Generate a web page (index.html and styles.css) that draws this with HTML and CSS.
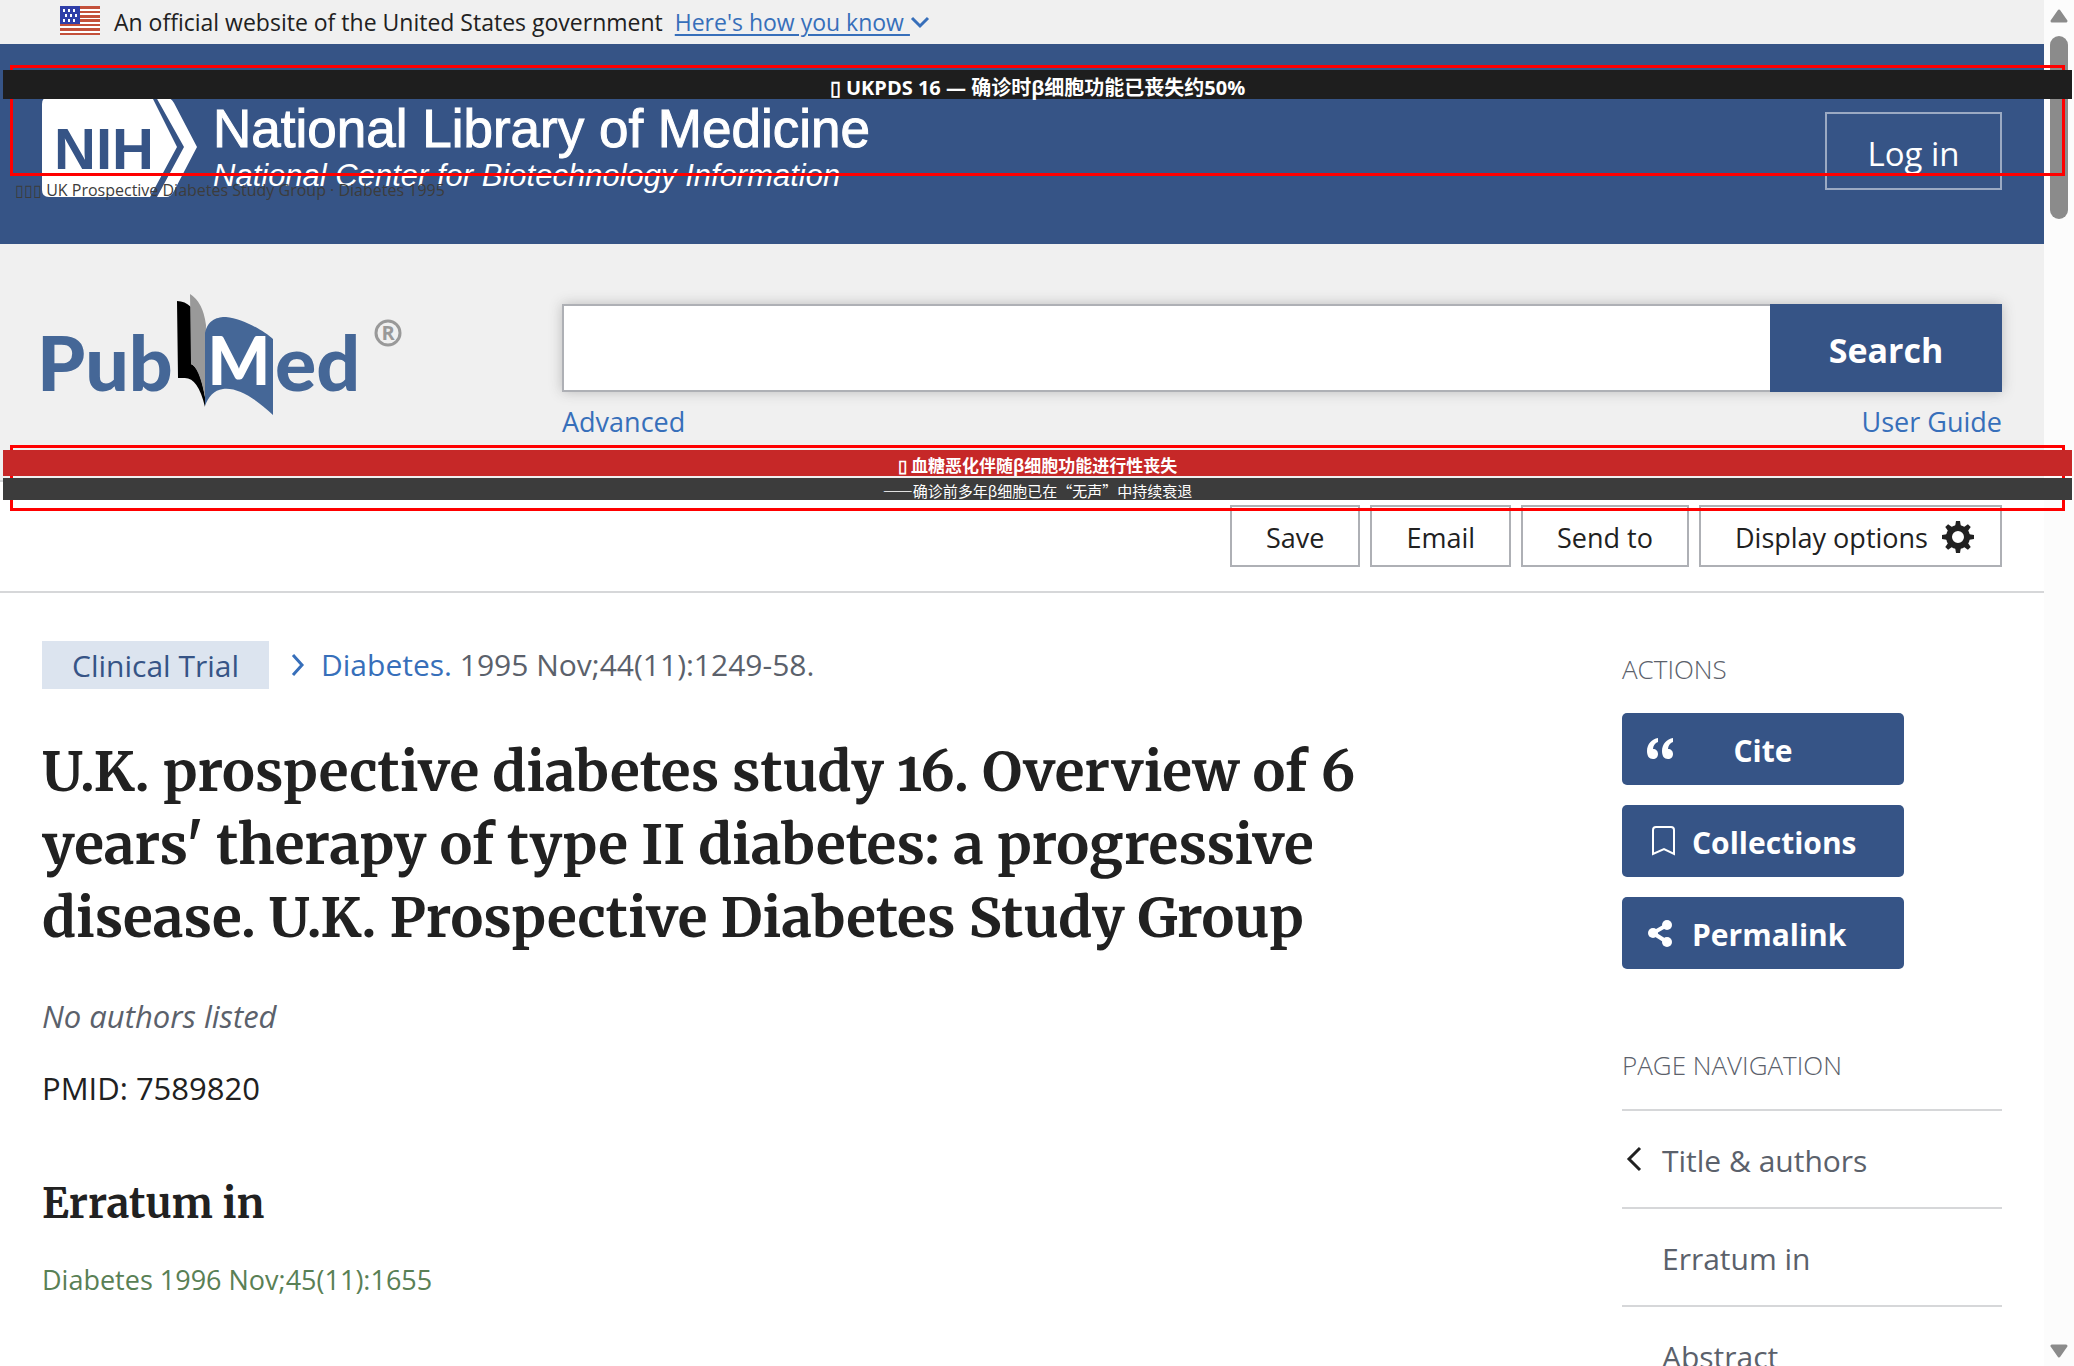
FILE: index.html
```html
<!DOCTYPE html>
<html lang="en">
<head>
<meta charset="utf-8">
<title>U.K. prospective diabetes study 16 - PubMed</title>
<link rel="stylesheet" href="styles.css">
</head>
<body>
<div class="page">
  <div class="gov">
    <svg class="flag" viewBox="0 0 40 29" aria-hidden="true">
      <path fill="#fff" d="M0 0h40v29H0z"/>
      <path fill="#c3503a" d="M0 0h40v3H0zM0 5h40v2H0zM0 9h40v3H0zM0 13h40v3H0zM0 18h40v2H0zM0 22h40v3H0zM0 27h40v2H0z"/>
      <path fill="#2f3ea8" d="M0 0h20v18H0z"/>
      <path fill="#fff" d="M3 3h2v3H3zM8 3h2v3H8zM13 3h2v3h-2zM5 8h2v3H5zM10 8h2v3h-2zM15 8h2v3h-2zM3 13h2v3H3zM8 13h2v3H8zM13 13h2v3h-2z"/>
    </svg>
    <span>An official website of the United States government</span>
    <a class="how" href="#how"><span class="how-text">Here's how you know </span><svg class="how-chevron" viewBox="0 0 20 13" aria-hidden="true"><path d="M2 2l8 8 8-8"/></svg></a>
  </div>

  <header class="masthead">
    <a class="nlm" href="#nlm">
      <svg class="nih" viewBox="0 0 155 100" role="img" aria-label="NIH">
        <path fill="#fff" d="M7 0H110L135 50 108 100H7Q0 100 0 93V7Q0 0 7 0zM114 0H122Q129 0 132 6L155 50 132 94Q129 100 124 100H115L142 50z"/>
        <text class="nih-text" x="62" y="72">NIH</text>
      </svg>
      <span class="nlm-names">
        <span class="nlm-title">National Library of Medicine</span>
        <span class="nlm-sub">National Center for Biotechnology Information</span>
      </span>
    </a>
    <button class="login" type="button">Log in</button>
  </header>

  <section class="search">
    <a class="logo" href="#home">
      <svg class="pubmed" viewBox="0 0 362 125" role="img" aria-label="PubMed">
        <text class="word" x="-5" y="98">Pub</text>
        <path d="M135 8Q143 8 149 14V71Q158 74 163 104V114Q156 84 142 85H136z"/>
        <path fill="#999" d="M148 1Q161 9 164 32L163 104Q157 74 149 71z"/>
        <path fill="#456797" d="M163 40C166 26 176 24 184 24 200 25 222 38 231 46V122C214 106 196 94 181 96 172 97 166 104 163 113z"/>
        <text class="word-m" x="197" y="92">M</text>
        <text class="word" x="233" y="98">ed</text>
        <circle cx="346" cy="40" r="12" fill="none" stroke="#999" stroke-width="3"/>
        <text class="reg" x="346" y="47">R</text>
      </svg>
    </a>
    <form class="search-form">
      <div class="search-row">
        <input class="term" type="text" aria-label="Search term">
        <button class="go" type="button">Search</button>
      </div>
      <div class="search-links"><a href="#advanced">Advanced</a><a href="#guide">User Guide</a></div>
    </form>
  </section>

  <div class="tools">
    <button class="tool" type="button">Save</button>
    <button class="tool" type="button">Email</button>
    <button class="tool" type="button">Send to</button>
    <button class="tool tool-wide" type="button">Display options
      <svg class="gear" viewBox="-16 -16 32 32" aria-hidden="true">
        <circle r="9" fill="none" stroke="#212121" stroke-width="6"/>
        <g fill="#212121"><path id="t" d="M-3-10L-2-16H2L3-10z"/><use href="#t" transform="rotate(45)"/><use href="#t" transform="rotate(90)"/><use href="#t" transform="rotate(135)"/><use href="#t" transform="rotate(180)"/><use href="#t" transform="rotate(225)"/><use href="#t" transform="rotate(270)"/><use href="#t" transform="rotate(315)"/></g>
      </svg>
    </button>
  </div>

  <div class="body">
    <main class="article">
      <div class="source">
        <span class="tag">Clinical Trial</span>
        <svg class="source-chevron" viewBox="0 0 14 24" aria-hidden="true"><path d="M2 2l9 10-9 10"/></svg>
        <span class="cite-line"><a href="#journal">Diabetes.</a> 1995 Nov;44(11):1249-58.</span>
      </div>
      <h1 class="title">U.K. prospective diabetes study 16. Overview of 6 years' therapy of type II diabetes: a progressive disease. U.K. Prospective Diabetes Study Group</h1>
      <p class="authors">No authors listed</p>
      <p class="pmid">PMID: 7589820</p>
      <h2 class="subtitle">Erratum in</h2>
      <a class="erratum" href="#erratum">Diabetes 1996 Nov;45(11):1655</a>
    </main>

    <aside class="side">
      <h3 class="side-title">ACTIONS</h3>
      <div class="actions">
        <button class="action" type="button">
          <svg class="ico" viewBox="0 0 28 32" aria-hidden="true"><path fill="#fff" d="M12 5C6 6 1 11 1 18c0 5 2 8 6 8 3 0 5-2 5-5s-2-5-5-5c0-3 2-6 5-7zM27 5c-6 1-11 6-11 13 0 5 2 8 6 8 3 0 5-2 5-5s-2-5-5-5c0-3 2-6 5-7z"/></svg>
          <span class="cite-label">Cite</span>
        </button>
        <button class="action" type="button">
          <svg class="ico" viewBox="0 0 28 32" aria-hidden="true"><path fill="none" stroke="#fff" stroke-width="2" d="M7 29V5Q7 2 10 2H25Q28 2 28 5V29L18 24z"/></svg>
          <span>Collections</span>
        </button>
        <button class="action" type="button">
          <svg class="ico" viewBox="0 0 28 32" aria-hidden="true"><path fill="none" stroke="#fff" stroke-width="4" d="M21 8L7 16l14 9"/><g fill="#fff"><circle cx="21" cy="8" r="5"/><circle cx="7" cy="16" r="5"/><circle cx="21" cy="25" r="5"/></g></svg>
          <span>Permalink</span>
        </button>
      </div>
      <h3 class="side-title nav-title">PAGE NAVIGATION</h3>
      <nav class="nav">
        <a class="nav-item" href="#title"><svg class="nav-chevron" viewBox="0 0 16 26" aria-hidden="true"><path d="M14 2L3 13l11 11"/></svg>Title &amp; authors</a>
        <a class="nav-item" href="#erratum">Erratum in</a>
        <a class="nav-item" href="#abstract">Abstract</a>
      </nav>
    </aside>
  </div>
</div>

<div class="scrollbar" aria-hidden="true">
  <svg class="arrow" viewBox="0 0 18 14"><path d="M9 2l7 10H2z"/></svg>
  <div class="thumb"></div>
  <svg class="arrow arrow-down" viewBox="0 0 18 14"><path d="M9 12L2 2h14z"/></svg>
</div>

<div class="frame frame-top"></div>
<div class="note note-top" lang="zh-CN">▯ UKPDS 16 — 确诊时β细胞功能已丧失约50%</div>
<div class="caption">▯▯▯ UK Prospective Diabetes Study Group · Diabetes 1995</div>
<div class="frame frame-mid"></div>
<div class="note note-red" lang="zh-CN">▯ 血糖恶化伴随β细胞功能进行性丧失</div>
<div class="note note-dark" lang="zh-CN">——确诊前多年β细胞已在“无声”中持续衰退</div>
</body>
</html>
```
FILE: styles.css
```css
* { box-sizing: border-box; }

body {
  margin: 0;
  height: 100vh;
  overflow: hidden;
  position: relative;
  display: grid;
  grid-template-columns: minmax(0, 1fr) 30px;
  grid-template-rows: 100vh;
  background: #fff;
  color: #212121;
  font-family: "Segoe UI", "Open Sans", "Noto Sans CJK SC", sans-serif;
  font-size: 30px;
}

button, input { font: inherit; }
h1, h2, h3, p { margin: 0; }
a { color: #376fba; text-decoration: none; }

/* government banner */
.gov {
  display: flex;
  align-items: center;
  height: 44px;
  padding: 0 60px;
  background: #f0f0f0;
  font-size: 23px;
  line-height: 48px;
}
.flag { width: 40px; height: 29px; margin: 0 14px 4px 0; }
.how { margin-left: 12px; }
.how-text { text-decoration: underline; text-underline-offset: 3px; white-space: pre; }
.how-chevron { width: 20px; height: 13px; margin-bottom: 2px; }
.how-chevron path { fill: none; stroke: #376fba; stroke-width: 3; }

/* blue masthead */
.masthead {
  display: flex;
  justify-content: space-between;
  height: 200px;
  padding: 53px 42px 0;
  background: #365486;
}
.nlm { display: flex; gap: 16px; color: #fff; }
.nih { width: 155px; height: 100px; }
.nih-text {
  font: bold 58px "Liberation Sans", Arial, sans-serif;
  fill: #365486;
  text-anchor: middle;
}
.nlm-names {
  display: flex;
  flex-direction: column;
  padding-top: 4px;
  font-family: "Liberation Sans", Arial, sans-serif;
}
.nlm-title { font-size: 53px; line-height: 56px; -webkit-text-stroke: 1px #fff; }
.nlm-sub { font-size: 31px; font-style: italic; line-height: 38px; }
.login {
  width: 177px;
  height: 78px;
  margin-top: 15px;
  padding: 4px 0 0;
  background: none;
  border: 2px solid #9baac3;
  color: #fff;
  font-size: 33px;
}

/* search */
.search {
  display: grid;
  grid-template-columns: 520px minmax(0, 1fr);
  height: 238px;
  padding: 60px 42px 0;
  background: #f0f0f0;
  border-bottom: 2px solid #d6d7d9;
}
.logo { margin-top: -11px; }
.pubmed { width: 362px; height: 125px; overflow: visible; }
.word { font: 900 77px Lato, sans-serif; fill: #456797; }
.word-m { font: 900 66px Lato, sans-serif; fill: #fff; text-anchor: middle; }
.reg { font: bold 20px "Open Sans", sans-serif; fill: #999; text-anchor: middle; }
.search-row { display: flex; box-shadow: 0 0 12px #bbb; }
.term {
  flex: 1;
  min-width: 0;
  height: 88px;
  padding: 0 20px;
  background: #fff;
  border: 2px solid #aeb0b5;
  border-right: 0;
}
.go {
  width: 232px;
  height: 88px;
  padding: 4px 0 0;
  background: #365486;
  border: 0;
  color: #fff;
  font-size: 34px;
  font-weight: 700;
}
.search-links {
  display: flex;
  justify-content: space-between;
  padding-top: 10px;
  font-size: 27px;
  line-height: 40px;
}

/* toolbar */
.tools {
  display: flex;
  justify-content: flex-end;
  gap: 10px;
  height: 111px;
  padding: 23px 42px 0;
  border-bottom: 2px solid #d6d7d9;
}
.tool {
  display: flex;
  align-items: center;
  gap: 14px;
  height: 62px;
  padding: 2px 34px 0;
  background: #fff;
  border: 2px solid #aeb0b5;
  color: #212121;
  font-size: 27px;
}
.tool-wide { padding-right: 26px; }
.gear { width: 32px; height: 32px; }

/* article */
.body {
  display: grid;
  grid-template-columns: minmax(0, 1fr) 380px;
  gap: 200px;
  padding: 48px 42px 0;
}
.source { display: flex; align-items: center; height: 48px; line-height: 50px; color: #5b616b; }
.tag { height: 48px; padding: 0 30px; margin-right: 22px; background: #dce4ef; color: #365486; }
.source-chevron { width: 14px; height: 24px; margin-right: 16px; }
.source-chevron path { fill: none; stroke: #376fba; stroke-width: 3; }
.title {
  margin-top: 46px;
  font-family: Merriweather, "Liberation Serif", serif;
  font-size: 55px;
  font-variant-numeric: oldstyle-nums;
  line-height: 73px;
}
.authors { margin-top: 38px; color: #5b616b; font-size: 31px; font-style: italic; line-height: 48px; }
.pmid { margin-top: 24px; font-size: 31px; line-height: 48px; }
.subtitle {
  margin: 60px 0 24px;
  font-family: Merriweather, "Liberation Serif", serif;
  font-size: 41px;
  line-height: 64px;
}
.erratum { display: block; color: #598055; font-size: 27px; line-height: 40px; }

/* sidebar */
.side-title {
  padding-top: 8px;
  color: #5b616b;
  font-size: 26px;
  font-weight: 300;
  line-height: 40px;
}
.actions { display: flex; flex-direction: column; gap: 20px; width: 282px; margin-top: 24px; }
.action {
  display: flex;
  align-items: center;
  gap: 18px;
  height: 72px;
  padding: 2px 24px 0;
  background: #365486;
  border: 0;
  border-radius: 5px;
  color: #fff;
  font-size: 30px;
  font-weight: 700;
  text-align: left;
}
.ico { width: 28px; height: 32px; margin-bottom: 2px; overflow: visible; }
.cite-label { flex: 1; padding-right: 46px; text-align: center; }
.nav-title { margin-top: 68px; }
.nav { margin-top: 24px; }
.nav-item {
  display: block;
  position: relative;
  height: 98px;
  padding-left: 40px;
  border-top: 2px solid #d6d7d9;
  color: #5b616b;
  line-height: 100px;
}
.nav-chevron { position: absolute; left: 4px; top: 35px; width: 16px; height: 26px; }
.nav-chevron path { fill: none; stroke: #212121; stroke-width: 3; }

/* scrollbar */
.scrollbar {
  display: flex;
  flex-direction: column;
  align-items: center;
  padding: 9px 0 8px;
  background: #fcfcfc;
}
.arrow { width: 18px; height: 14px; }
.arrow path { fill: #8b8b8b; stroke: #8b8b8b; stroke-width: 3; stroke-linejoin: round; }
.arrow-down { margin-top: auto; }
.thumb { width: 18px; height: 183px; margin-top: 13px; border-radius: 9px; background: #8b8b8b; }

/* annotations over the page */
.frame { position: absolute; left: 10px; right: 9px; border: 3px solid #f00; }
.frame-top { top: 65px; height: 111px; }
.frame-mid { top: 445px; height: 66px; }
.note {
  position: absolute;
  left: 3px;
  right: 2px;
  color: #fff;
  font-weight: 700;
  text-align: center;
  white-space: nowrap;
}
.note-top { top: 70px; height: 29px; background: #1e1e1e; font-size: 20px; line-height: 36px; }
.note-red { top: 450px; height: 26px; background: #c62828; font-size: 17px; line-height: 32px; }
.note-dark {
  top: 478px;
  height: 22px;
  background: #3c3c3c;
  font-family: "Noto Sans CJK SC", sans-serif;
  font-size: 15px;
  font-weight: 400;
  line-height: 26px;
}
.caption { position: absolute; top: 180px; left: 15px; color: #3c3c3c; font-size: 16px; line-height: 20px; }
```
